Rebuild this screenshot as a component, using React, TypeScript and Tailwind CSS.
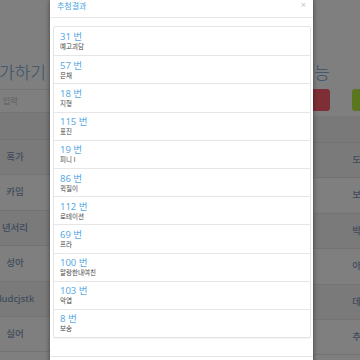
const results = [
  { no: 31, name: "예고괴담" },
  { no: 57, name: "은채" },
  { no: 18, name: "지형" },
  { no: 115, name: "표진" },
  { no: 19, name: "피니 l" },
  { no: 86, name: "퀵질이" },
  { no: 112, name: "로테이션" },
  { no: 69, name: "프라" },
  { no: 100, name: "말랑한내여친" },
  { no: 103, name: "악엽" },
  { no: 8, name: "보송" },
];

const leftRows = ["혹가", "카임", "년서리", "성아", "dudcjstk", "실어"];
const rightRows = ["도화", "보이", "박진", "아수", "데이", "추워"];

export default function App() {
  return (
    <div
      className="relative w-[360px] h-[360px] overflow-hidden bg-white"
      style={{ fontFamily: '"Noto Sans", "Noto Sans CJK KR", sans-serif' }}
    >
      {/* page underneath */}
      <div className="flex w-[620px] -ml-[110px]">
        <div className="w-[160px] shrink-0">
          <div className="h-[62px]" />
          <div className="text-right pr-[4px] text-[17px] leading-[22px] font-light text-[#6fa6d6] whitespace-nowrap">
            추첨 참가하기
          </div>
          <div className="mt-[5px] h-[24px] border-y border-[#e6e6e6] flex items-center pl-[96px] text-[8px] text-[#bbb] whitespace-nowrap">
            이름 입력
          </div>
          <div className="h-[27px] bg-[#f2f2f2] border-b border-[#e6e6e6]" />
          {leftRows.map((r, i) => (
            <div
              key={r}
              className={`h-[35.4px] flex items-center border-b border-[#e6e6e6] ${i % 2 === 0 ? "bg-[#f4f4f4]" : "bg-white"}`}
            >
              <div className="w-[100px]" />
              <div className="w-[50px] text-center text-[9.5px] font-medium text-[#7f98b6] whitespace-nowrap">{r}</div>
            </div>
          ))}
        </div>
        <div className="w-[260px] shrink-0" />
        <div className="w-[200px] shrink-0">
          <div className="h-[62px]" />
          <div className="w-[20px] flex justify-end">
            <span className="shrink-0 text-[17px] leading-[22px] font-light text-[#6fa6d6] whitespace-nowrap">
              추첨기능
            </span>
          </div>
          <div className="mt-[5px] h-[24px] flex gap-[22px] -ml-[10px]">
            <div className="w-[30px] h-[22px] rounded-[3px] bg-[#fc5c6a]" />
            <div className="w-[30px] h-[22px] rounded-[3px] bg-[#b7ee3c]" />
          </div>
          <div className="mt-[3px] h-[27px] bg-[#f2f2f2] border-b border-[#e6e6e6]" />
          {rightRows.map((r, i) => (
            <div
              key={r}
              className={`h-[35.4px] flex items-center border-b border-[#e6e6e6] ${i % 2 === 0 ? "bg-[#f4f4f4]" : "bg-white"}`}
            >
              <div className="w-[31px]" />
              <div className="w-[40px] text-center text-[9.5px] font-medium text-[#7f98b6] whitespace-nowrap">{r}</div>
            </div>
          ))}
        </div>
      </div>

      {/* backdrop */}
      <div className="absolute inset-0 bg-black/50" />

      {/* modal */}
      <div className="absolute top-0 left-[50px] w-[263px] h-[380px] bg-white shadow-[0_0_5px_rgba(0,0,0,0.5)]">
        <div className="h-[18px] border-b border-[#e8e8e8] flex justify-between px-[7px]">
          <span className="text-[8px] leading-[12px] text-[#4ba6df]">추첨결과</span>
          <span className="text-[9px] leading-[10px] text-[#c4c4c4]">×</span>
        </div>
        <div className="pt-[8px] pl-[3px] pr-[2px] pb-[18px] border-b border-[#e5e5e5]">
          <div className="border border-[#e4e4e4] rounded-[2px] shadow-[0_1px_1px_rgba(0,0,0,0.05)]">
            {results.map((r, i) => (
              <div
                key={r.no}
                className={`h-[28.2px] pl-[6px] flex flex-col justify-center ${i > 0 ? "border-t border-[#e6e6e6]" : ""}`}
              >
                <div className="text-[9.5px] leading-[11px] text-[#5aaae3]">{r.no} 번</div>
                <div className="text-[6.5px] leading-[9px] text-[#444]">{r.name}</div>
              </div>
            ))}
          </div>
        </div>
      </div>
    </div>
  );
}
